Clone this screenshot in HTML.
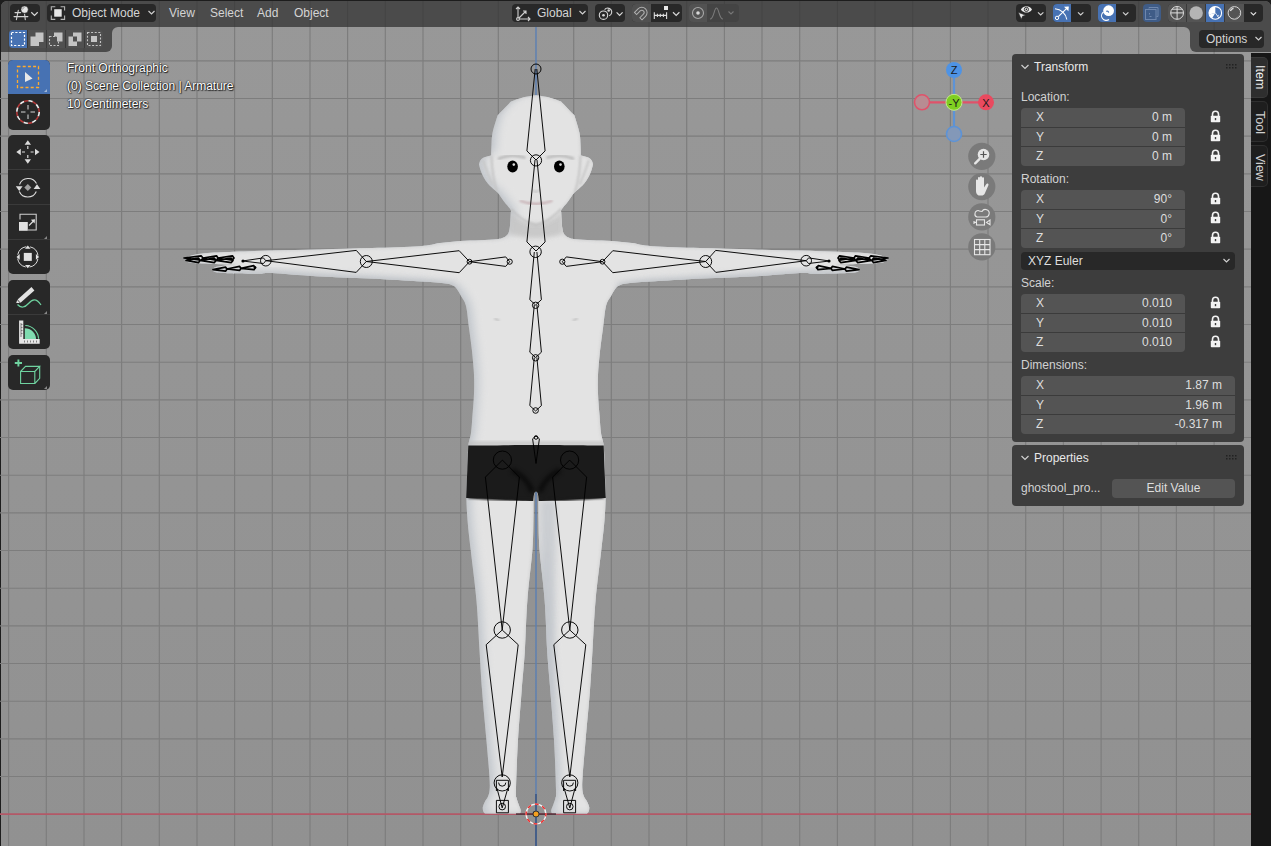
<!DOCTYPE html>
<html><head><meta charset="utf-8"><style>
*{margin:0;padding:0;box-sizing:border-box}
html,body{width:1271px;height:846px;overflow:hidden;background:#1d1d1d;font-family:"Liberation Sans",sans-serif;font-size:12px;color:#d6d6d6}
.abs{position:absolute}
</style></head><body>
<svg class="abs" style="left:0;top:0" width="1271" height="846" viewBox="0 0 1271 846">
<defs>
<linearGradient id="vpbg" x1="0" y1="0" x2="0" y2="1"><stop offset="0" stop-color="#989898"/><stop offset="1" stop-color="#919191"/></linearGradient>
</defs>
<rect x="1" y="1" width="1270" height="845" fill="url(#vpbg)"/>
<path d="M8.6 1V846M46.3 1V846M84.0 1V846M121.6 1V846M159.3 1V846M197.0 1V846M234.6 1V846M272.3 1V846M310.0 1V846M347.6 1V846M385.3 1V846M423.0 1V846M460.7 1V846M498.3 1V846M573.7 1V846M611.3 1V846M649.0 1V846M686.7 1V846M724.4 1V846M762.0 1V846M799.7 1V846M837.4 1V846M875.0 1V846M912.7 1V846M950.4 1V846M988.0 1V846M1025.7 1V846M1063.4 1V846M1101.1 1V846M1138.7 1V846M1176.4 1V846M1214.1 1V846M0 776.5H1251M0 738.9H1251M0 701.2H1251M0 663.5H1251M0 625.9H1251M0 588.2H1251M0 550.5H1251M0 512.8H1251M0 475.2H1251M0 437.5H1251M0 399.8H1251M0 362.2H1251M0 324.5H1251M0 286.8H1251M0 249.1H1251M0 211.5H1251M0 173.8H1251M0 136.1H1251M0 98.5H1251M0 60.8H1251" stroke="#7d7d7d" stroke-width="1.15" fill="none"/>
<path d="M0 814.2H1251" stroke="#b35867" stroke-width="1.7"/>
<path d="M536 27V846" stroke="#5b7fb3" stroke-width="1.4"/>
<defs>
<clipPath id="bodyclip"><path d="M536.0 95.3C533.8 95.7 527.2 96.5 523.0 97.5C518.8 98.5 513.0 100.8 511.0 101.5C508.8 103.8 499.8 113.2 497.5 115.5C496.7 118.4 493.5 128.1 492.5 133.0C491.5 137.9 491.7 141.2 491.5 145.0C491.3 148.8 491.2 153.8 491.2 155.5C490.1 155.8 486.3 156.5 484.5 157.3C482.7 158.1 481.4 159.0 480.5 160.2C479.6 161.4 479.2 163.6 479.0 164.3C479.2 165.2 479.8 167.9 480.5 170.0C481.2 172.1 482.2 174.7 483.5 177.0C484.8 179.3 486.2 181.7 488.0 183.8C489.8 185.9 493.0 188.6 494.0 189.5C494.7 190.1 496.3 191.0 498.0 193.0C499.7 195.0 501.9 198.8 504.0 201.5C506.1 204.2 509.4 207.8 510.5 209.5C511.6 211.2 510.8 211.6 510.8 212.0C510.7 213.3 510.6 217.3 510.4 220.0C510.2 222.7 510.1 225.7 509.7 228.0C509.3 230.3 509.0 232.4 508.0 234.0C507.0 235.6 505.3 236.7 503.5 237.6C501.7 238.5 500.9 238.8 497.0 239.2C493.1 239.6 486.2 239.9 480.0 240.2C473.8 240.5 466.7 240.4 460.0 240.9C453.3 241.4 446.7 242.1 440.0 243.0C433.3 243.9 431.3 245.4 420.0 246.2C408.7 247.0 388.7 247.5 372.0 248.0C355.3 248.5 336.7 249.0 320.0 249.4C303.3 249.8 286.4 250.1 272.0 250.5C257.6 250.9 244.7 251.4 233.5 251.8C222.3 252.2 211.9 252.6 205.0 253.2C198.1 253.8 195.4 254.3 192.0 255.2C188.6 256.1 185.8 257.9 184.5 258.5C184.9 259.1 185.1 261.0 187.0 261.8C188.9 262.6 190.2 262.8 196.0 263.2C201.8 263.6 215.3 264.0 222.0 264.2C228.7 264.4 233.7 264.5 236.0 264.6C234.0 264.8 227.5 265.4 224.0 265.8C220.5 266.2 216.9 266.6 215.0 267.3C213.1 268.0 212.9 269.6 212.5 270.0C213.1 270.4 213.1 271.8 216.0 272.3C218.9 272.9 223.0 273.1 230.0 273.3C237.0 273.5 251.0 273.8 258.0 273.7C265.0 273.6 262.3 272.6 272.0 273.0C281.7 273.4 299.7 275.3 316.0 276.2C332.3 277.1 352.3 277.6 370.0 278.5C387.7 279.4 409.3 280.7 422.0 281.5C434.7 282.3 440.8 282.8 446.0 283.5C451.2 284.2 451.2 284.7 453.0 285.5C454.8 286.3 455.2 286.8 456.5 288.5C457.8 290.2 459.4 293.1 461.0 296.0C462.6 298.9 464.7 300.7 466.0 306.0C467.3 311.3 468.0 320.5 469.0 328.0C470.0 335.5 471.2 343.2 472.0 351.0C472.8 358.8 473.7 367.9 474.0 375.0C474.3 382.1 474.2 386.8 474.0 393.5C473.8 400.2 473.0 408.4 472.5 415.0C472.0 421.6 471.7 427.8 471.0 433.0C470.3 438.2 468.9 439.8 468.3 446.0C467.7 452.2 467.6 461.7 467.3 470.0C467.0 478.3 466.4 487.7 466.4 496.0C466.4 504.3 466.8 511.0 467.5 520.0C468.2 529.0 469.2 536.7 470.7 550.0C472.2 563.3 474.9 583.3 476.4 600.0C477.9 616.7 478.6 635.0 479.5 650.0C480.4 665.0 480.9 675.0 482.0 690.0C483.1 705.0 485.2 725.7 486.4 740.0C487.6 754.3 488.9 767.7 489.4 776.0C489.9 784.3 489.9 786.5 489.6 790.0C489.3 793.5 488.6 795.1 487.8 797.0C487.0 798.9 485.8 799.8 485.0 801.5C484.2 803.2 483.1 805.3 482.8 807.0C482.5 808.7 482.9 810.4 483.3 811.5C483.7 812.6 484.7 813.2 485.0 813.6C490.8 813.6 514.0 813.6 519.8 813.6C520.0 813.1 521.0 812.1 520.8 810.5C520.6 808.9 519.2 806.1 518.5 804.0C517.8 801.9 517.0 800.3 516.6 798.0C516.2 795.7 515.8 799.7 516.0 790.0C516.2 780.3 517.0 756.7 518.0 740.0C519.0 723.3 520.6 705.0 521.7 690.0C522.9 675.0 524.0 665.0 524.9 650.0C525.8 635.0 526.1 616.7 527.4 600.0C528.6 583.3 531.4 563.3 532.4 550.0C533.4 536.7 533.2 528.3 533.4 520.0C533.6 511.7 533.4 504.4 533.6 500.0C533.8 495.6 534.0 494.9 534.4 493.5C534.8 492.1 535.7 491.8 536.0 491.5C536.3 491.8 537.2 492.1 537.6 493.5C538.0 494.9 538.2 495.6 538.4 500.0C538.6 504.4 538.4 511.7 538.6 520.0C538.8 528.3 538.6 536.7 539.6 550.0C540.6 563.3 543.4 583.3 544.6 600.0C545.9 616.7 546.2 635.0 547.1 650.0C548.0 665.0 549.1 675.0 550.3 690.0C551.4 705.0 553.0 723.3 554.0 740.0C555.0 756.7 555.8 780.3 556.0 790.0C556.2 799.7 555.8 795.7 555.4 798.0C555.0 800.3 554.2 801.9 553.5 804.0C552.8 806.1 551.4 808.9 551.2 810.5C551.0 812.1 552.0 813.1 552.2 813.6C558.0 813.6 581.2 813.6 587.0 813.6C587.3 813.2 588.3 812.6 588.7 811.5C589.1 810.4 589.5 808.7 589.2 807.0C588.9 805.3 587.8 803.2 587.0 801.5C586.2 799.8 585.0 798.9 584.2 797.0C583.4 795.1 582.7 793.5 582.4 790.0C582.1 786.5 582.1 784.3 582.6 776.0C583.1 767.7 584.4 754.3 585.6 740.0C586.8 725.7 588.9 705.0 590.0 690.0C591.1 675.0 591.6 665.0 592.5 650.0C593.4 635.0 594.1 616.7 595.6 600.0C597.1 583.3 599.8 563.3 601.3 550.0C602.8 536.7 603.8 529.0 604.5 520.0C605.2 511.0 605.6 504.3 605.6 496.0C605.6 487.7 605.0 478.3 604.7 470.0C604.4 461.7 604.3 452.2 603.7 446.0C603.1 439.8 601.7 438.2 601.0 433.0C600.3 427.8 600.0 421.6 599.5 415.0C599.0 408.4 598.2 400.2 598.0 393.5C597.8 386.8 597.7 382.1 598.0 375.0C598.3 367.9 599.2 358.8 600.0 351.0C600.8 343.2 602.0 335.5 603.0 328.0C604.0 320.5 604.7 311.3 606.0 306.0C607.3 300.7 609.4 298.9 611.0 296.0C612.6 293.1 614.2 290.2 615.5 288.5C616.8 286.8 617.2 286.3 619.0 285.5C620.8 284.7 620.8 284.2 626.0 283.5C631.2 282.8 637.3 282.3 650.0 281.5C662.7 280.7 684.3 279.4 702.0 278.5C719.7 277.6 739.7 277.1 756.0 276.2C772.3 275.3 790.3 273.4 800.0 273.0C809.7 272.6 807.0 273.6 814.0 273.7C821.0 273.8 835.0 273.5 842.0 273.3C849.0 273.1 853.1 272.9 856.0 272.3C858.9 271.8 858.9 270.4 859.5 270.0C859.1 269.6 858.9 268.0 857.0 267.3C855.1 266.6 851.5 266.2 848.0 265.8C844.5 265.4 838.0 264.8 836.0 264.6C838.3 264.5 843.3 264.4 850.0 264.2C856.7 264.0 870.2 263.6 876.0 263.2C881.8 262.8 883.1 262.6 885.0 261.8C886.9 261.0 887.1 259.1 887.5 258.5C886.2 257.9 883.4 256.1 880.0 255.2C876.6 254.3 873.9 253.8 867.0 253.2C860.1 252.6 849.7 252.2 838.5 251.8C827.3 251.4 814.4 250.9 800.0 250.5C785.6 250.1 768.7 249.8 752.0 249.4C735.3 249.0 716.7 248.5 700.0 248.0C683.3 247.5 663.3 247.0 652.0 246.2C640.7 245.4 638.7 243.9 632.0 243.0C625.3 242.1 618.7 241.4 612.0 240.9C605.3 240.4 598.2 240.5 592.0 240.2C585.8 239.9 578.9 239.6 575.0 239.2C571.1 238.8 570.3 238.5 568.5 237.6C566.7 236.7 565.0 235.6 564.0 234.0C563.0 232.4 562.7 230.3 562.3 228.0C561.9 225.7 561.8 222.7 561.6 220.0C561.4 217.3 561.3 213.3 561.2 212.0C561.2 211.6 560.4 211.2 561.5 209.5C562.6 207.8 565.9 204.2 568.0 201.5C570.1 198.8 572.3 195.0 574.0 193.0C575.7 191.0 577.3 190.1 578.0 189.5C579.0 188.6 582.2 185.9 584.0 183.8C585.8 181.7 587.2 179.3 588.5 177.0C589.8 174.7 590.8 172.1 591.5 170.0C592.2 167.9 592.8 165.2 593.0 164.3C592.8 163.6 592.4 161.4 591.5 160.2C590.6 159.0 589.3 158.1 587.5 157.3C585.7 156.5 581.9 155.8 580.8 155.5C580.8 153.8 580.7 148.8 580.5 145.0C580.3 141.2 580.5 137.9 579.5 133.0C578.5 128.1 575.3 118.4 574.5 115.5C572.2 113.2 563.2 103.8 561.0 101.5C559.0 100.8 553.2 98.5 549.0 97.5C544.8 96.5 538.2 95.7 536.0 95.3Z"/></clipPath>
<filter id="blur3" x="-20%" y="-20%" width="140%" height="140%" color-interpolation-filters="sRGB"><feGaussianBlur stdDeviation="3"/></filter>
<filter id="blur1" x="-20%" y="-20%" width="140%" height="140%" color-interpolation-filters="sRGB"><feGaussianBlur stdDeviation="1"/></filter>
<filter id="blur2" x="-50%" y="-50%" width="200%" height="200%" color-interpolation-filters="sRGB"><feGaussianBlur stdDeviation="2"/></filter>
<filter id="blur4" x="-50%" y="-50%" width="200%" height="200%" color-interpolation-filters="sRGB"><feGaussianBlur stdDeviation="4"/></filter>
<filter id="blur6" x="-50%" y="-50%" width="200%" height="200%" color-interpolation-filters="sRGB"><feGaussianBlur stdDeviation="6"/></filter>
</defs>
<path d="M536.0 95.3C533.8 95.7 527.2 96.5 523.0 97.5C518.8 98.5 513.0 100.8 511.0 101.5C508.8 103.8 499.8 113.2 497.5 115.5C496.7 118.4 493.5 128.1 492.5 133.0C491.5 137.9 491.7 141.2 491.5 145.0C491.3 148.8 491.2 153.8 491.2 155.5C490.1 155.8 486.3 156.5 484.5 157.3C482.7 158.1 481.4 159.0 480.5 160.2C479.6 161.4 479.2 163.6 479.0 164.3C479.2 165.2 479.8 167.9 480.5 170.0C481.2 172.1 482.2 174.7 483.5 177.0C484.8 179.3 486.2 181.7 488.0 183.8C489.8 185.9 493.0 188.6 494.0 189.5C494.7 190.1 496.3 191.0 498.0 193.0C499.7 195.0 501.9 198.8 504.0 201.5C506.1 204.2 509.4 207.8 510.5 209.5C511.6 211.2 510.8 211.6 510.8 212.0C510.7 213.3 510.6 217.3 510.4 220.0C510.2 222.7 510.1 225.7 509.7 228.0C509.3 230.3 509.0 232.4 508.0 234.0C507.0 235.6 505.3 236.7 503.5 237.6C501.7 238.5 500.9 238.8 497.0 239.2C493.1 239.6 486.2 239.9 480.0 240.2C473.8 240.5 466.7 240.4 460.0 240.9C453.3 241.4 446.7 242.1 440.0 243.0C433.3 243.9 431.3 245.4 420.0 246.2C408.7 247.0 388.7 247.5 372.0 248.0C355.3 248.5 336.7 249.0 320.0 249.4C303.3 249.8 286.4 250.1 272.0 250.5C257.6 250.9 244.7 251.4 233.5 251.8C222.3 252.2 211.9 252.6 205.0 253.2C198.1 253.8 195.4 254.3 192.0 255.2C188.6 256.1 185.8 257.9 184.5 258.5C184.9 259.1 185.1 261.0 187.0 261.8C188.9 262.6 190.2 262.8 196.0 263.2C201.8 263.6 215.3 264.0 222.0 264.2C228.7 264.4 233.7 264.5 236.0 264.6C234.0 264.8 227.5 265.4 224.0 265.8C220.5 266.2 216.9 266.6 215.0 267.3C213.1 268.0 212.9 269.6 212.5 270.0C213.1 270.4 213.1 271.8 216.0 272.3C218.9 272.9 223.0 273.1 230.0 273.3C237.0 273.5 251.0 273.8 258.0 273.7C265.0 273.6 262.3 272.6 272.0 273.0C281.7 273.4 299.7 275.3 316.0 276.2C332.3 277.1 352.3 277.6 370.0 278.5C387.7 279.4 409.3 280.7 422.0 281.5C434.7 282.3 440.8 282.8 446.0 283.5C451.2 284.2 451.2 284.7 453.0 285.5C454.8 286.3 455.2 286.8 456.5 288.5C457.8 290.2 459.4 293.1 461.0 296.0C462.6 298.9 464.7 300.7 466.0 306.0C467.3 311.3 468.0 320.5 469.0 328.0C470.0 335.5 471.2 343.2 472.0 351.0C472.8 358.8 473.7 367.9 474.0 375.0C474.3 382.1 474.2 386.8 474.0 393.5C473.8 400.2 473.0 408.4 472.5 415.0C472.0 421.6 471.7 427.8 471.0 433.0C470.3 438.2 468.9 439.8 468.3 446.0C467.7 452.2 467.6 461.7 467.3 470.0C467.0 478.3 466.4 487.7 466.4 496.0C466.4 504.3 466.8 511.0 467.5 520.0C468.2 529.0 469.2 536.7 470.7 550.0C472.2 563.3 474.9 583.3 476.4 600.0C477.9 616.7 478.6 635.0 479.5 650.0C480.4 665.0 480.9 675.0 482.0 690.0C483.1 705.0 485.2 725.7 486.4 740.0C487.6 754.3 488.9 767.7 489.4 776.0C489.9 784.3 489.9 786.5 489.6 790.0C489.3 793.5 488.6 795.1 487.8 797.0C487.0 798.9 485.8 799.8 485.0 801.5C484.2 803.2 483.1 805.3 482.8 807.0C482.5 808.7 482.9 810.4 483.3 811.5C483.7 812.6 484.7 813.2 485.0 813.6C490.8 813.6 514.0 813.6 519.8 813.6C520.0 813.1 521.0 812.1 520.8 810.5C520.6 808.9 519.2 806.1 518.5 804.0C517.8 801.9 517.0 800.3 516.6 798.0C516.2 795.7 515.8 799.7 516.0 790.0C516.2 780.3 517.0 756.7 518.0 740.0C519.0 723.3 520.6 705.0 521.7 690.0C522.9 675.0 524.0 665.0 524.9 650.0C525.8 635.0 526.1 616.7 527.4 600.0C528.6 583.3 531.4 563.3 532.4 550.0C533.4 536.7 533.2 528.3 533.4 520.0C533.6 511.7 533.4 504.4 533.6 500.0C533.8 495.6 534.0 494.9 534.4 493.5C534.8 492.1 535.7 491.8 536.0 491.5C536.3 491.8 537.2 492.1 537.6 493.5C538.0 494.9 538.2 495.6 538.4 500.0C538.6 504.4 538.4 511.7 538.6 520.0C538.8 528.3 538.6 536.7 539.6 550.0C540.6 563.3 543.4 583.3 544.6 600.0C545.9 616.7 546.2 635.0 547.1 650.0C548.0 665.0 549.1 675.0 550.3 690.0C551.4 705.0 553.0 723.3 554.0 740.0C555.0 756.7 555.8 780.3 556.0 790.0C556.2 799.7 555.8 795.7 555.4 798.0C555.0 800.3 554.2 801.9 553.5 804.0C552.8 806.1 551.4 808.9 551.2 810.5C551.0 812.1 552.0 813.1 552.2 813.6C558.0 813.6 581.2 813.6 587.0 813.6C587.3 813.2 588.3 812.6 588.7 811.5C589.1 810.4 589.5 808.7 589.2 807.0C588.9 805.3 587.8 803.2 587.0 801.5C586.2 799.8 585.0 798.9 584.2 797.0C583.4 795.1 582.7 793.5 582.4 790.0C582.1 786.5 582.1 784.3 582.6 776.0C583.1 767.7 584.4 754.3 585.6 740.0C586.8 725.7 588.9 705.0 590.0 690.0C591.1 675.0 591.6 665.0 592.5 650.0C593.4 635.0 594.1 616.7 595.6 600.0C597.1 583.3 599.8 563.3 601.3 550.0C602.8 536.7 603.8 529.0 604.5 520.0C605.2 511.0 605.6 504.3 605.6 496.0C605.6 487.7 605.0 478.3 604.7 470.0C604.4 461.7 604.3 452.2 603.7 446.0C603.1 439.8 601.7 438.2 601.0 433.0C600.3 427.8 600.0 421.6 599.5 415.0C599.0 408.4 598.2 400.2 598.0 393.5C597.8 386.8 597.7 382.1 598.0 375.0C598.3 367.9 599.2 358.8 600.0 351.0C600.8 343.2 602.0 335.5 603.0 328.0C604.0 320.5 604.7 311.3 606.0 306.0C607.3 300.7 609.4 298.9 611.0 296.0C612.6 293.1 614.2 290.2 615.5 288.5C616.8 286.8 617.2 286.3 619.0 285.5C620.8 284.7 620.8 284.2 626.0 283.5C631.2 282.8 637.3 282.3 650.0 281.5C662.7 280.7 684.3 279.4 702.0 278.5C719.7 277.6 739.7 277.1 756.0 276.2C772.3 275.3 790.3 273.4 800.0 273.0C809.7 272.6 807.0 273.6 814.0 273.7C821.0 273.8 835.0 273.5 842.0 273.3C849.0 273.1 853.1 272.9 856.0 272.3C858.9 271.8 858.9 270.4 859.5 270.0C859.1 269.6 858.9 268.0 857.0 267.3C855.1 266.6 851.5 266.2 848.0 265.8C844.5 265.4 838.0 264.8 836.0 264.6C838.3 264.5 843.3 264.4 850.0 264.2C856.7 264.0 870.2 263.6 876.0 263.2C881.8 262.8 883.1 262.6 885.0 261.8C886.9 261.0 887.1 259.1 887.5 258.5C886.2 257.9 883.4 256.1 880.0 255.2C876.6 254.3 873.9 253.8 867.0 253.2C860.1 252.6 849.7 252.2 838.5 251.8C827.3 251.4 814.4 250.9 800.0 250.5C785.6 250.1 768.7 249.8 752.0 249.4C735.3 249.0 716.7 248.5 700.0 248.0C683.3 247.5 663.3 247.0 652.0 246.2C640.7 245.4 638.7 243.9 632.0 243.0C625.3 242.1 618.7 241.4 612.0 240.9C605.3 240.4 598.2 240.5 592.0 240.2C585.8 239.9 578.9 239.6 575.0 239.2C571.1 238.8 570.3 238.5 568.5 237.6C566.7 236.7 565.0 235.6 564.0 234.0C563.0 232.4 562.7 230.3 562.3 228.0C561.9 225.7 561.8 222.7 561.6 220.0C561.4 217.3 561.3 213.3 561.2 212.0C561.2 211.6 560.4 211.2 561.5 209.5C562.6 207.8 565.9 204.2 568.0 201.5C570.1 198.8 572.3 195.0 574.0 193.0C575.7 191.0 577.3 190.1 578.0 189.5C579.0 188.6 582.2 185.9 584.0 183.8C585.8 181.7 587.2 179.3 588.5 177.0C589.8 174.7 590.8 172.1 591.5 170.0C592.2 167.9 592.8 165.2 593.0 164.3C592.8 163.6 592.4 161.4 591.5 160.2C590.6 159.0 589.3 158.1 587.5 157.3C585.7 156.5 581.9 155.8 580.8 155.5C580.8 153.8 580.7 148.8 580.5 145.0C580.3 141.2 580.5 137.9 579.5 133.0C578.5 128.1 575.3 118.4 574.5 115.5C572.2 113.2 563.2 103.8 561.0 101.5C559.0 100.8 553.2 98.5 549.0 97.5C544.8 96.5 538.2 95.7 536.0 95.3Z" fill="#c4c9cf"/>
<g clip-path="url(#bodyclip)">
<path d="M536.0 95.3C533.8 95.7 527.2 96.5 523.0 97.5C518.8 98.5 513.0 100.8 511.0 101.5C508.8 103.8 499.8 113.2 497.5 115.5C496.7 118.4 493.5 128.1 492.5 133.0C491.5 137.9 491.7 141.2 491.5 145.0C491.3 148.8 491.2 153.8 491.2 155.5C490.1 155.8 486.3 156.5 484.5 157.3C482.7 158.1 481.4 159.0 480.5 160.2C479.6 161.4 479.2 163.6 479.0 164.3C479.2 165.2 479.8 167.9 480.5 170.0C481.2 172.1 482.2 174.7 483.5 177.0C484.8 179.3 486.2 181.7 488.0 183.8C489.8 185.9 493.0 188.6 494.0 189.5C494.7 190.1 496.3 191.0 498.0 193.0C499.7 195.0 501.9 198.8 504.0 201.5C506.1 204.2 509.4 207.8 510.5 209.5C511.6 211.2 510.8 211.6 510.8 212.0C510.7 213.3 510.6 217.3 510.4 220.0C510.2 222.7 510.1 225.7 509.7 228.0C509.3 230.3 509.0 232.4 508.0 234.0C507.0 235.6 505.3 236.7 503.5 237.6C501.7 238.5 500.9 238.8 497.0 239.2C493.1 239.6 486.2 239.9 480.0 240.2C473.8 240.5 466.7 240.4 460.0 240.9C453.3 241.4 446.7 242.1 440.0 243.0C433.3 243.9 431.3 245.4 420.0 246.2C408.7 247.0 388.7 247.5 372.0 248.0C355.3 248.5 336.7 249.0 320.0 249.4C303.3 249.8 286.4 250.1 272.0 250.5C257.6 250.9 244.7 251.4 233.5 251.8C222.3 252.2 211.9 252.6 205.0 253.2C198.1 253.8 195.4 254.3 192.0 255.2C188.6 256.1 185.8 257.9 184.5 258.5C184.9 259.1 185.1 261.0 187.0 261.8C188.9 262.6 190.2 262.8 196.0 263.2C201.8 263.6 215.3 264.0 222.0 264.2C228.7 264.4 233.7 264.5 236.0 264.6C234.0 264.8 227.5 265.4 224.0 265.8C220.5 266.2 216.9 266.6 215.0 267.3C213.1 268.0 212.9 269.6 212.5 270.0C213.1 270.4 213.1 271.8 216.0 272.3C218.9 272.9 223.0 273.1 230.0 273.3C237.0 273.5 251.0 273.8 258.0 273.7C265.0 273.6 262.3 272.6 272.0 273.0C281.7 273.4 299.7 275.3 316.0 276.2C332.3 277.1 352.3 277.6 370.0 278.5C387.7 279.4 409.3 280.7 422.0 281.5C434.7 282.3 440.8 282.8 446.0 283.5C451.2 284.2 451.2 284.7 453.0 285.5C454.8 286.3 455.2 286.8 456.5 288.5C457.8 290.2 459.4 293.1 461.0 296.0C462.6 298.9 464.7 300.7 466.0 306.0C467.3 311.3 468.0 320.5 469.0 328.0C470.0 335.5 471.2 343.2 472.0 351.0C472.8 358.8 473.7 367.9 474.0 375.0C474.3 382.1 474.2 386.8 474.0 393.5C473.8 400.2 473.0 408.4 472.5 415.0C472.0 421.6 471.7 427.8 471.0 433.0C470.3 438.2 468.9 439.8 468.3 446.0C467.7 452.2 467.6 461.7 467.3 470.0C467.0 478.3 466.4 487.7 466.4 496.0C466.4 504.3 466.8 511.0 467.5 520.0C468.2 529.0 469.2 536.7 470.7 550.0C472.2 563.3 474.9 583.3 476.4 600.0C477.9 616.7 478.6 635.0 479.5 650.0C480.4 665.0 480.9 675.0 482.0 690.0C483.1 705.0 485.2 725.7 486.4 740.0C487.6 754.3 488.9 767.7 489.4 776.0C489.9 784.3 489.9 786.5 489.6 790.0C489.3 793.5 488.6 795.1 487.8 797.0C487.0 798.9 485.8 799.8 485.0 801.5C484.2 803.2 483.1 805.3 482.8 807.0C482.5 808.7 482.9 810.4 483.3 811.5C483.7 812.6 484.7 813.2 485.0 813.6C490.8 813.6 514.0 813.6 519.8 813.6C520.0 813.1 521.0 812.1 520.8 810.5C520.6 808.9 519.2 806.1 518.5 804.0C517.8 801.9 517.0 800.3 516.6 798.0C516.2 795.7 515.8 799.7 516.0 790.0C516.2 780.3 517.0 756.7 518.0 740.0C519.0 723.3 520.6 705.0 521.7 690.0C522.9 675.0 524.0 665.0 524.9 650.0C525.8 635.0 526.1 616.7 527.4 600.0C528.6 583.3 531.4 563.3 532.4 550.0C533.4 536.7 533.2 528.3 533.4 520.0C533.6 511.7 533.4 504.4 533.6 500.0C533.8 495.6 534.0 494.9 534.4 493.5C534.8 492.1 535.7 491.8 536.0 491.5C536.3 491.8 537.2 492.1 537.6 493.5C538.0 494.9 538.2 495.6 538.4 500.0C538.6 504.4 538.4 511.7 538.6 520.0C538.8 528.3 538.6 536.7 539.6 550.0C540.6 563.3 543.4 583.3 544.6 600.0C545.9 616.7 546.2 635.0 547.1 650.0C548.0 665.0 549.1 675.0 550.3 690.0C551.4 705.0 553.0 723.3 554.0 740.0C555.0 756.7 555.8 780.3 556.0 790.0C556.2 799.7 555.8 795.7 555.4 798.0C555.0 800.3 554.2 801.9 553.5 804.0C552.8 806.1 551.4 808.9 551.2 810.5C551.0 812.1 552.0 813.1 552.2 813.6C558.0 813.6 581.2 813.6 587.0 813.6C587.3 813.2 588.3 812.6 588.7 811.5C589.1 810.4 589.5 808.7 589.2 807.0C588.9 805.3 587.8 803.2 587.0 801.5C586.2 799.8 585.0 798.9 584.2 797.0C583.4 795.1 582.7 793.5 582.4 790.0C582.1 786.5 582.1 784.3 582.6 776.0C583.1 767.7 584.4 754.3 585.6 740.0C586.8 725.7 588.9 705.0 590.0 690.0C591.1 675.0 591.6 665.0 592.5 650.0C593.4 635.0 594.1 616.7 595.6 600.0C597.1 583.3 599.8 563.3 601.3 550.0C602.8 536.7 603.8 529.0 604.5 520.0C605.2 511.0 605.6 504.3 605.6 496.0C605.6 487.7 605.0 478.3 604.7 470.0C604.4 461.7 604.3 452.2 603.7 446.0C603.1 439.8 601.7 438.2 601.0 433.0C600.3 427.8 600.0 421.6 599.5 415.0C599.0 408.4 598.2 400.2 598.0 393.5C597.8 386.8 597.7 382.1 598.0 375.0C598.3 367.9 599.2 358.8 600.0 351.0C600.8 343.2 602.0 335.5 603.0 328.0C604.0 320.5 604.7 311.3 606.0 306.0C607.3 300.7 609.4 298.9 611.0 296.0C612.6 293.1 614.2 290.2 615.5 288.5C616.8 286.8 617.2 286.3 619.0 285.5C620.8 284.7 620.8 284.2 626.0 283.5C631.2 282.8 637.3 282.3 650.0 281.5C662.7 280.7 684.3 279.4 702.0 278.5C719.7 277.6 739.7 277.1 756.0 276.2C772.3 275.3 790.3 273.4 800.0 273.0C809.7 272.6 807.0 273.6 814.0 273.7C821.0 273.8 835.0 273.5 842.0 273.3C849.0 273.1 853.1 272.9 856.0 272.3C858.9 271.8 858.9 270.4 859.5 270.0C859.1 269.6 858.9 268.0 857.0 267.3C855.1 266.6 851.5 266.2 848.0 265.8C844.5 265.4 838.0 264.8 836.0 264.6C838.3 264.5 843.3 264.4 850.0 264.2C856.7 264.0 870.2 263.6 876.0 263.2C881.8 262.8 883.1 262.6 885.0 261.8C886.9 261.0 887.1 259.1 887.5 258.5C886.2 257.9 883.4 256.1 880.0 255.2C876.6 254.3 873.9 253.8 867.0 253.2C860.1 252.6 849.7 252.2 838.5 251.8C827.3 251.4 814.4 250.9 800.0 250.5C785.6 250.1 768.7 249.8 752.0 249.4C735.3 249.0 716.7 248.5 700.0 248.0C683.3 247.5 663.3 247.0 652.0 246.2C640.7 245.4 638.7 243.9 632.0 243.0C625.3 242.1 618.7 241.4 612.0 240.9C605.3 240.4 598.2 240.5 592.0 240.2C585.8 239.9 578.9 239.6 575.0 239.2C571.1 238.8 570.3 238.5 568.5 237.6C566.7 236.7 565.0 235.6 564.0 234.0C563.0 232.4 562.7 230.3 562.3 228.0C561.9 225.7 561.8 222.7 561.6 220.0C561.4 217.3 561.3 213.3 561.2 212.0C561.2 211.6 560.4 211.2 561.5 209.5C562.6 207.8 565.9 204.2 568.0 201.5C570.1 198.8 572.3 195.0 574.0 193.0C575.7 191.0 577.3 190.1 578.0 189.5C579.0 188.6 582.2 185.9 584.0 183.8C585.8 181.7 587.2 179.3 588.5 177.0C589.8 174.7 590.8 172.1 591.5 170.0C592.2 167.9 592.8 165.2 593.0 164.3C592.8 163.6 592.4 161.4 591.5 160.2C590.6 159.0 589.3 158.1 587.5 157.3C585.7 156.5 581.9 155.8 580.8 155.5C580.8 153.8 580.7 148.8 580.5 145.0C580.3 141.2 580.5 137.9 579.5 133.0C578.5 128.1 575.3 118.4 574.5 115.5C572.2 113.2 563.2 103.8 561.0 101.5C559.0 100.8 553.2 98.5 549.0 97.5C544.8 96.5 538.2 95.7 536.0 95.3Z" fill="#e3e3e3" stroke="#e3e3e3" stroke-width="6" transform="translate(8,-2)" filter="url(#blur4)"/>
<path d="M536.0 95.3C533.8 95.7 527.2 96.5 523.0 97.5C518.8 98.5 513.0 100.8 511.0 101.5C508.8 103.8 499.8 113.2 497.5 115.5C496.7 118.4 493.5 128.1 492.5 133.0C491.5 137.9 491.7 141.2 491.5 145.0C491.3 148.8 491.2 153.8 491.2 155.5C490.1 155.8 486.3 156.5 484.5 157.3C482.7 158.1 481.4 159.0 480.5 160.2C479.6 161.4 479.2 163.6 479.0 164.3C479.2 165.2 479.8 167.9 480.5 170.0C481.2 172.1 482.2 174.7 483.5 177.0C484.8 179.3 486.2 181.7 488.0 183.8C489.8 185.9 493.0 188.6 494.0 189.5C494.7 190.1 496.3 191.0 498.0 193.0C499.7 195.0 501.9 198.8 504.0 201.5C506.1 204.2 509.4 207.8 510.5 209.5C511.6 211.2 510.8 211.6 510.8 212.0C510.7 213.3 510.6 217.3 510.4 220.0C510.2 222.7 510.1 225.7 509.7 228.0C509.3 230.3 509.0 232.4 508.0 234.0C507.0 235.6 505.3 236.7 503.5 237.6C501.7 238.5 500.9 238.8 497.0 239.2C493.1 239.6 486.2 239.9 480.0 240.2C473.8 240.5 466.7 240.4 460.0 240.9C453.3 241.4 446.7 242.1 440.0 243.0C433.3 243.9 431.3 245.4 420.0 246.2C408.7 247.0 388.7 247.5 372.0 248.0C355.3 248.5 336.7 249.0 320.0 249.4C303.3 249.8 286.4 250.1 272.0 250.5C257.6 250.9 244.7 251.4 233.5 251.8C222.3 252.2 211.9 252.6 205.0 253.2C198.1 253.8 195.4 254.3 192.0 255.2C188.6 256.1 185.8 257.9 184.5 258.5C184.9 259.1 185.1 261.0 187.0 261.8C188.9 262.6 190.2 262.8 196.0 263.2C201.8 263.6 215.3 264.0 222.0 264.2C228.7 264.4 233.7 264.5 236.0 264.6C234.0 264.8 227.5 265.4 224.0 265.8C220.5 266.2 216.9 266.6 215.0 267.3C213.1 268.0 212.9 269.6 212.5 270.0C213.1 270.4 213.1 271.8 216.0 272.3C218.9 272.9 223.0 273.1 230.0 273.3C237.0 273.5 251.0 273.8 258.0 273.7C265.0 273.6 262.3 272.6 272.0 273.0C281.7 273.4 299.7 275.3 316.0 276.2C332.3 277.1 352.3 277.6 370.0 278.5C387.7 279.4 409.3 280.7 422.0 281.5C434.7 282.3 440.8 282.8 446.0 283.5C451.2 284.2 451.2 284.7 453.0 285.5C454.8 286.3 455.2 286.8 456.5 288.5C457.8 290.2 459.4 293.1 461.0 296.0C462.6 298.9 464.7 300.7 466.0 306.0C467.3 311.3 468.0 320.5 469.0 328.0C470.0 335.5 471.2 343.2 472.0 351.0C472.8 358.8 473.7 367.9 474.0 375.0C474.3 382.1 474.2 386.8 474.0 393.5C473.8 400.2 473.0 408.4 472.5 415.0C472.0 421.6 471.7 427.8 471.0 433.0C470.3 438.2 468.9 439.8 468.3 446.0C467.7 452.2 467.6 461.7 467.3 470.0C467.0 478.3 466.4 487.7 466.4 496.0C466.4 504.3 466.8 511.0 467.5 520.0C468.2 529.0 469.2 536.7 470.7 550.0C472.2 563.3 474.9 583.3 476.4 600.0C477.9 616.7 478.6 635.0 479.5 650.0C480.4 665.0 480.9 675.0 482.0 690.0C483.1 705.0 485.2 725.7 486.4 740.0C487.6 754.3 488.9 767.7 489.4 776.0C489.9 784.3 489.9 786.5 489.6 790.0C489.3 793.5 488.6 795.1 487.8 797.0C487.0 798.9 485.8 799.8 485.0 801.5C484.2 803.2 483.1 805.3 482.8 807.0C482.5 808.7 482.9 810.4 483.3 811.5C483.7 812.6 484.7 813.2 485.0 813.6C490.8 813.6 514.0 813.6 519.8 813.6C520.0 813.1 521.0 812.1 520.8 810.5C520.6 808.9 519.2 806.1 518.5 804.0C517.8 801.9 517.0 800.3 516.6 798.0C516.2 795.7 515.8 799.7 516.0 790.0C516.2 780.3 517.0 756.7 518.0 740.0C519.0 723.3 520.6 705.0 521.7 690.0C522.9 675.0 524.0 665.0 524.9 650.0C525.8 635.0 526.1 616.7 527.4 600.0C528.6 583.3 531.4 563.3 532.4 550.0C533.4 536.7 533.2 528.3 533.4 520.0C533.6 511.7 533.4 504.4 533.6 500.0C533.8 495.6 534.0 494.9 534.4 493.5C534.8 492.1 535.7 491.8 536.0 491.5C536.3 491.8 537.2 492.1 537.6 493.5C538.0 494.9 538.2 495.6 538.4 500.0C538.6 504.4 538.4 511.7 538.6 520.0C538.8 528.3 538.6 536.7 539.6 550.0C540.6 563.3 543.4 583.3 544.6 600.0C545.9 616.7 546.2 635.0 547.1 650.0C548.0 665.0 549.1 675.0 550.3 690.0C551.4 705.0 553.0 723.3 554.0 740.0C555.0 756.7 555.8 780.3 556.0 790.0C556.2 799.7 555.8 795.7 555.4 798.0C555.0 800.3 554.2 801.9 553.5 804.0C552.8 806.1 551.4 808.9 551.2 810.5C551.0 812.1 552.0 813.1 552.2 813.6C558.0 813.6 581.2 813.6 587.0 813.6C587.3 813.2 588.3 812.6 588.7 811.5C589.1 810.4 589.5 808.7 589.2 807.0C588.9 805.3 587.8 803.2 587.0 801.5C586.2 799.8 585.0 798.9 584.2 797.0C583.4 795.1 582.7 793.5 582.4 790.0C582.1 786.5 582.1 784.3 582.6 776.0C583.1 767.7 584.4 754.3 585.6 740.0C586.8 725.7 588.9 705.0 590.0 690.0C591.1 675.0 591.6 665.0 592.5 650.0C593.4 635.0 594.1 616.7 595.6 600.0C597.1 583.3 599.8 563.3 601.3 550.0C602.8 536.7 603.8 529.0 604.5 520.0C605.2 511.0 605.6 504.3 605.6 496.0C605.6 487.7 605.0 478.3 604.7 470.0C604.4 461.7 604.3 452.2 603.7 446.0C603.1 439.8 601.7 438.2 601.0 433.0C600.3 427.8 600.0 421.6 599.5 415.0C599.0 408.4 598.2 400.2 598.0 393.5C597.8 386.8 597.7 382.1 598.0 375.0C598.3 367.9 599.2 358.8 600.0 351.0C600.8 343.2 602.0 335.5 603.0 328.0C604.0 320.5 604.7 311.3 606.0 306.0C607.3 300.7 609.4 298.9 611.0 296.0C612.6 293.1 614.2 290.2 615.5 288.5C616.8 286.8 617.2 286.3 619.0 285.5C620.8 284.7 620.8 284.2 626.0 283.5C631.2 282.8 637.3 282.3 650.0 281.5C662.7 280.7 684.3 279.4 702.0 278.5C719.7 277.6 739.7 277.1 756.0 276.2C772.3 275.3 790.3 273.4 800.0 273.0C809.7 272.6 807.0 273.6 814.0 273.7C821.0 273.8 835.0 273.5 842.0 273.3C849.0 273.1 853.1 272.9 856.0 272.3C858.9 271.8 858.9 270.4 859.5 270.0C859.1 269.6 858.9 268.0 857.0 267.3C855.1 266.6 851.5 266.2 848.0 265.8C844.5 265.4 838.0 264.8 836.0 264.6C838.3 264.5 843.3 264.4 850.0 264.2C856.7 264.0 870.2 263.6 876.0 263.2C881.8 262.8 883.1 262.6 885.0 261.8C886.9 261.0 887.1 259.1 887.5 258.5C886.2 257.9 883.4 256.1 880.0 255.2C876.6 254.3 873.9 253.8 867.0 253.2C860.1 252.6 849.7 252.2 838.5 251.8C827.3 251.4 814.4 250.9 800.0 250.5C785.6 250.1 768.7 249.8 752.0 249.4C735.3 249.0 716.7 248.5 700.0 248.0C683.3 247.5 663.3 247.0 652.0 246.2C640.7 245.4 638.7 243.9 632.0 243.0C625.3 242.1 618.7 241.4 612.0 240.9C605.3 240.4 598.2 240.5 592.0 240.2C585.8 239.9 578.9 239.6 575.0 239.2C571.1 238.8 570.3 238.5 568.5 237.6C566.7 236.7 565.0 235.6 564.0 234.0C563.0 232.4 562.7 230.3 562.3 228.0C561.9 225.7 561.8 222.7 561.6 220.0C561.4 217.3 561.3 213.3 561.2 212.0C561.2 211.6 560.4 211.2 561.5 209.5C562.6 207.8 565.9 204.2 568.0 201.5C570.1 198.8 572.3 195.0 574.0 193.0C575.7 191.0 577.3 190.1 578.0 189.5C579.0 188.6 582.2 185.9 584.0 183.8C585.8 181.7 587.2 179.3 588.5 177.0C589.8 174.7 590.8 172.1 591.5 170.0C592.2 167.9 592.8 165.2 593.0 164.3C592.8 163.6 592.4 161.4 591.5 160.2C590.6 159.0 589.3 158.1 587.5 157.3C585.7 156.5 581.9 155.8 580.8 155.5C580.8 153.8 580.7 148.8 580.5 145.0C580.3 141.2 580.5 137.9 579.5 133.0C578.5 128.1 575.3 118.4 574.5 115.5C572.2 113.2 563.2 103.8 561.0 101.5C559.0 100.8 553.2 98.5 549.0 97.5C544.8 96.5 538.2 95.7 536.0 95.3Z" fill="none" stroke="#c8c8c8" stroke-width="2" filter="url(#blur1)" opacity="0.5"/>
<path d="M510 212Q536 236 562 212L563 234Q536 242 509 234Z" fill="#c6c6c6" filter="url(#blur2)" opacity="0.9"/>
<path d="M511 209Q523 222 536 225Q549 222 561 209" fill="none" stroke="#bdbdbd" stroke-width="1.6" filter="url(#blur1)"/>
<path d="M491.5 156Q492 176 497 192M580.5 156Q580 176 575 192" fill="none" stroke="#c4c4c4" stroke-width="2" filter="url(#blur1)"/>
<path d="M533 190Q536 194 539 190" fill="none" stroke="#c6c6c6" stroke-width="2" filter="url(#blur1)"/>
<rect x="460" y="441" width="152" height="5" fill="#c0c0c0" filter="url(#blur1)" opacity="0.6"/>
<path d="M200.0 271L316.0 277L422.0 283L455.0 287" fill="none" stroke="#bfc3c8" stroke-width="9" filter="url(#blur3)" opacity="0.75"/>
<path d="M872.0 271L756.0 277L650.0 283L617.0 287" fill="none" stroke="#bfc3c8" stroke-width="9" filter="url(#blur3)" opacity="0.75"/>
<path d="M540 500L556 500L553 790L543 790Z" fill="#c0c4ca" filter="url(#blur3)" opacity="0.7"/>
</g>
<g fill="none" stroke-linecap="round">
<path d="M499 158.5Q511 153.5 524.5 157.5M547.5 157.5Q561 153.5 573 158.5" stroke="#b9b9b9" stroke-width="2.6" filter="url(#blur1)"/>
<path d="M520.5 201Q536 207 551.7 201" stroke="#bfa3a8" stroke-width="1.8" filter="url(#blur1)"/>
<path d="M483.5 161Q486 170 492 184M588.5 161Q586 170 580 184" stroke="#c6c6c6" stroke-width="2" filter="url(#blur1)"/>
<path d="M495 318.5L498.5 320.5M577 318.5L573.5 320.5" stroke="#bdbdbd" stroke-width="2" filter="url(#blur1)"/>
</g>
<path d="M468.3 445.6C479.6 445.5 513.4 445.0 536.0 445.0C558.6 445.0 592.4 445.5 603.7 445.6C603.9 449.7 604.2 461.3 604.6 470.0C605.0 478.7 605.6 493.3 605.8 498.0C599.8 498.2 581.2 499.0 570.0 499.5C558.8 500.0 544.0 500.8 538.8 501.0C538.6 499.8 538.3 495.1 537.8 493.5C537.3 491.9 536.3 491.8 536.0 491.5C535.7 491.8 534.7 491.9 534.2 493.5C533.7 495.1 533.4 499.8 533.2 501.0C528.0 500.8 513.2 500.0 502.0 499.5C490.8 499.0 472.2 498.2 466.2 498.0C466.4 493.3 466.9 478.7 467.3 470.0C467.7 461.3 468.1 449.7 468.3 445.6Z" fill="#1b1b1b"/>
<path d="M468 497Q500 500 532 500M540 500Q572 500 604 497" stroke="#1b1b1b" stroke-width="2.5" fill="none" filter="url(#blur1)"/>
<path d="M512 470Q528 478 532 492M560 470Q544 478 540 492" stroke="#080808" stroke-width="4" fill="none" filter="url(#blur2)"/>
<g fill="#000">
<ellipse cx="512.6" cy="166.6" rx="5.3" ry="6"/>
<ellipse cx="559.3" cy="166.6" rx="5.3" ry="6"/>
</g>
<circle cx="513.8000000000001" cy="164.6" r="1.3" fill="#ddd"/>
<circle cx="560.5" cy="164.6" r="1.3" fill="#ddd"/>
<g stroke="#000" stroke-width="0.95" fill="none" stroke-linejoin="round"><path d="M536.0 160.0L545.1 150.9L536.8 69.0M535.2 69.0L526.9 150.9L536.0 160.0M536.0 251.0L545.1 241.9L537.0 160.0M535.0 160.0L526.9 241.9L536.0 251.0M535.6 305.0L541.4 299.7L536.9 252.0M534.3 252.0L529.8 299.7L535.6 305.0M535.6 357.5L541.4 352.2L536.9 305.0M534.3 305.0L529.8 352.2L535.6 357.5M535.6 411.0L541.4 405.6L536.9 357.5M534.3 357.5L529.8 405.6L535.6 411.0M536.0 436.0L532.6 438.8L536.0 463.5L539.4 438.8ZM509.7 261.7L505.7 256.9L469.5 261.7L505.7 266.4ZM469.5 261.7L459.2 250.7L366.3 261.5L459.2 272.7ZM366.3 261.5L356.3 250.4L265.8 260.7L356.2 272.4ZM265.8 260.7L263.4 257.9L242.5 261.0L263.5 263.5ZM502.4 460.1L485.4 477.1L502.2 630.0L519.4 477.1ZM502.2 630.0L486.2 644.7L502.2 777.0L518.2 644.7ZM497.0 788.4L502.2 807.9L507.8 788.4M496.4 791V780.3H508.4V791M496.4 800.4H508.4V812.8H496.4ZM498.6 782.6A3.6 3.6 0 0 0 505.8 782.6M562.3 261.7L566.3 266.4L602.5 261.7L566.3 256.9ZM602.5 261.7L612.8 272.7L705.7 261.5L612.8 250.7ZM705.7 261.5L715.8 272.4L806.2 260.7L715.7 250.4ZM806.2 260.7L808.5 263.5L829.5 261.0L808.6 257.9ZM569.6 460.1L552.6 477.1L569.8 630.0L586.6 477.1ZM569.8 630.0L553.8 644.7L569.8 777.0L585.8 644.7ZM575.0 788.4L569.8 807.9L564.2 788.4M575.6 791V780.3H563.6V791M575.6 800.4H563.6V812.8H575.6ZM573.4 782.6A3.6 3.6 0 0 1 566.2 782.6"/><circle cx="536.0" cy="69.0" r="5"/><circle cx="536.0" cy="160.4" r="5.6"/><circle cx="535.6" cy="251.8" r="5.7"/><circle cx="535.6" cy="305.3" r="3.2"/><circle cx="535.6" cy="357.8" r="3.2"/><circle cx="535.6" cy="410.5" r="2.8"/><circle cx="536.0" cy="437.5" r="1.8"/><circle cx="509.7" cy="261.7" r="2.6"/><circle cx="469.5" cy="261.7" r="2.4"/><circle cx="366.3" cy="261.5" r="6"/><circle cx="265.8" cy="260.7" r="5.3"/><circle cx="502.4" cy="460.1" r="9.1"/><circle cx="502.2" cy="630.0" r="8.2"/><circle cx="502.2" cy="782.9" r="8.1"/><circle cx="502.2" cy="806.6" r="3.3"/><circle cx="562.3" cy="261.7" r="2.6"/><circle cx="602.5" cy="261.7" r="2.4"/><circle cx="705.7" cy="261.5" r="6"/><circle cx="806.2" cy="260.7" r="5.3"/><circle cx="569.6" cy="460.1" r="9.1"/><circle cx="569.8" cy="630.0" r="8.2"/><circle cx="569.8" cy="782.9" r="8.1"/><circle cx="569.8" cy="806.6" r="3.3"/></g>
<path d="M234.0 258.0L232.4 255.8L218.0 258.0L232.4 260.2ZM218.0 258.0L216.5 255.8L203.0 258.0L216.5 260.2ZM203.0 258.0L201.1 255.8L184.0 258.0L201.1 260.2ZM233.0 260.4L231.3 258.2L216.0 260.4L231.3 262.6ZM216.0 260.4L214.4 258.2L200.0 260.4L214.4 262.6ZM200.0 260.4L198.6 258.2L186.0 260.4L198.6 262.6ZM255.3 267.6L253.8 265.7L241.0 268.3L254.0 269.7ZM241.0 268.3L239.5 266.4L227.0 269.0L239.7 270.4ZM227.0 269.0L225.5 267.1L213.0 269.6L225.7 271.1ZM838.0 258.0L839.6 260.2L854.0 258.0L839.6 255.8ZM854.0 258.0L855.5 260.2L869.0 258.0L855.5 255.8ZM869.0 258.0L870.9 260.2L888.0 258.0L870.9 255.8ZM839.0 260.4L840.7 262.6L856.0 260.4L840.7 258.2ZM856.0 260.4L857.6 262.6L872.0 260.4L857.6 258.2ZM872.0 260.4L873.4 262.6L886.0 260.4L873.4 258.2ZM816.7 267.6L818.0 269.7L831.0 268.3L818.2 265.7ZM831.0 268.3L832.3 270.4L845.0 269.0L832.5 266.4ZM845.0 269.0L846.3 271.1L859.0 269.6L846.5 267.1Z" stroke="#000" stroke-width="1.7" fill="none" stroke-linejoin="round"/>
<circle cx="243.0" cy="261" r="1.6" fill="#000"/><circle cx="255.0" cy="267.6" r="1.4" fill="#000"/>
<circle cx="829.0" cy="261" r="1.6" fill="#000"/><circle cx="817.0" cy="267.6" r="1.4" fill="#000"/>
<path d="M516 814.2H556" stroke="#5b3942" stroke-width="1.7"/><path d="M536 794V846" stroke="#3c5681" stroke-width="1.6"/>
<circle cx="536" cy="814" r="9.9" fill="none" stroke="#f4f4f4" stroke-width="1.4"/>
<circle cx="536" cy="814" r="9.9" fill="none" stroke="#ee3030" stroke-width="1.5" stroke-dasharray="3.89 3.89" stroke-dashoffset="1.5"/>
<circle cx="536" cy="814" r="3.3" fill="#1c2330"/><circle cx="536" cy="814" r="2.5" fill="#f5a020"/>
</svg>
<style>
.hdr{position:absolute;left:1px;top:1px;width:1270px;height:26px;background:rgba(50,50,50,0.75);border-radius:6px 6px 0 0}
.reg{position:absolute;background:rgba(50,50,50,0.75)}
.btn{position:absolute;height:18px;top:4px;background:#282828;border-radius:4px}
.mt{position:absolute;top:6px;font-size:12px;color:#d4d4d4;line-height:14px;white-space:nowrap}
.tb{position:absolute;left:8px;width:42px;background:#282828;border-radius:5px;overflow:hidden}
.tb .sep{position:absolute;left:0;width:42px;height:1px;background:#3a3a3a}
.ov{position:absolute;left:67px;font-size:12px;color:#ffffff;text-shadow:0 0 1.5px #000,1px 1px 1px rgba(0,0,0,.7),-0.5px -0.5px 1px rgba(0,0,0,.5);white-space:nowrap;line-height:14px}
.pnl{position:absolute;left:1012px;width:232px;background:#3d3d3d;border-radius:4px}
.lbl{position:absolute;left:9px;font-size:12px;color:#d2d2d2;line-height:14px;white-space:nowrap}
.fld{position:absolute;left:9px;background:#545454;border-radius:4px;overflow:hidden}
.row{position:absolute;left:0;height:19px;width:100%;font-size:12px;color:#dedede;line-height:19px}
.row .k{position:absolute;left:15px;top:0}
.row .v{position:absolute;right:13px;top:0}
.row.s{border-top:1px solid #3b3b3b}
.lock{position:absolute;left:198px}
.tab{position:absolute;left:1251px;width:17px;background:#2c2c2c;border-radius:0 5px 5px 0;border:1px solid #2f2f2f;border-left:none}
.tabt{position:absolute;left:3px;writing-mode:vertical-rl;font-size:12.5px;color:#d0d0d0;line-height:12px}
</style>
<!-- header -->
<div class="hdr"></div>
<svg class="abs" style="left:0;top:0" width="1271" height="10"><path d="M1 1H7A6 6 0 0 0 1 7Z M1265 1H1271V7A6 6 0 0 0 1265 1Z" fill="#1d1d1d"/></svg>
<div class="reg" style="left:1px;top:27px;width:111px;height:25px;border-radius:0 0 6px 0"></div>
<div class="reg" style="left:1190px;top:27px;width:81px;height:25px;border-radius:0 0 0 6px"></div>

<div class="btn" style="left:10px;width:30px"></div>
<svg class="abs" style="left:10px;top:4px" width="30" height="18" viewBox="0 0 30 18">
<g stroke="#d2d2d2" stroke-width="1.1" fill="none" stroke-linecap="round"><path d="M5 8.6H10.6M4 12.6H17.9M8.3 6.3L6.4 15.6M14.6 10.3L15.3 15.6"/></g>
<circle cx="14.6" cy="5.6" r="3.6" fill="#e6e6e6" stroke="#2a2a2a" stroke-width="0.5"/><path d="M12.6 5.5A2 2 0 0 1 14.5 3.5" stroke="#777" stroke-width="0.7" fill="none"/>
<path d="M21.3 8.3L24.5 11.4L27.7 8.3" stroke="#d8d8d8" stroke-width="1.2" fill="none"/>
</svg>
<div class="btn" style="left:47px;width:109px"></div>
<svg class="abs" style="left:47px;top:4px" width="22" height="18" viewBox="0 0 22 18">
<path d="M4.3 6.6V2.8H8.3M13.6 2.8H17.6V6.6M17.6 11.6V15.4H13.6M8.3 15.4H4.3V11.6" stroke="#b4b4b4" stroke-width="1.1" fill="none"/>
<rect x="6.6" y="4.6" width="8.7" height="8.7" fill="#1e1e1e"/><rect x="7.2" y="5.2" width="7.5" height="7.5" fill="#e6e6e6"/>
</svg>
<div class="mt" style="left:72px">Object Mode</div>
<svg class="abs" style="left:147px;top:9px" width="10" height="8"><path d="M1.5 2L4.5 5L7.5 2" stroke="#cfcfcf" stroke-width="1.2" fill="none"/></svg>
<div class="mt" style="left:169px">View</div>
<div class="mt" style="left:210px">Select</div>
<div class="mt" style="left:257px">Add</div>
<div class="mt" style="left:294px">Object</div>

<div class="btn" style="left:512px;width:76px"></div>
<svg class="abs" style="left:512px;top:4px" width="22" height="18" viewBox="0 0 22 18">
<g stroke="#d0d0d0" stroke-width="1.1" fill="none"><path d="M6 15V3M4 5L6 3L8 5M6 15H18M16 13L18 15L16 17M6 15L14 7M11 7H14V10"/><circle cx="6" cy="15" r="1.4" fill="#282828"/></g>
</svg>
<div class="mt" style="left:537px">Global</div>
<svg class="abs" style="left:578px;top:9px" width="10" height="8"><path d="M1.5 2L4.5 5L7.5 2" stroke="#cfcfcf" stroke-width="1.2" fill="none"/></svg>

<div class="btn" style="left:595px;width:30px"></div>
<svg class="abs" style="left:595px;top:4px" width="30" height="18" viewBox="0 0 30 18">
<g stroke="#d8d8d8" stroke-width="1.1" fill="none"><circle cx="8.5" cy="11.2" r="4.2"/><path d="M9.6 5.6A4 4 0 1 1 14.2 11.8"/></g>
<circle cx="8.5" cy="11.2" r="1.3" fill="#d8d8d8"/><circle cx="13.7" cy="6.5" r="1.3" fill="#d8d8d8"/>
<path d="M21.6 8.3L24.6 11.3L27.6 8.3" stroke="#d8d8d8" stroke-width="1.2" fill="none"/>
</svg>

<div class="btn" style="left:632px;width:50px"></div>
<div class="btn" style="left:632px;width:19px;background:#505050;border-radius:4px 0 0 4px"></div>
<svg class="abs" style="left:632px;top:4px" width="50" height="18" viewBox="0 0 50 18">
<path transform="translate(9.8 8.6) rotate(45)" d="M-5.3 5V0A5.3 5.3 0 0 1 5.3 0V5H2.3V0A2.3 2.3 0 0 0 -2.3 0V5Z" stroke="#b0b0b0" stroke-width="1" fill="none"/>
<g stroke="#dcdcdc" stroke-width="1.1" fill="none"><path d="M22.3 11.4H34.6M22.3 8.3V14.9M25.4 9.8V13M28.3 9.8V13M31.4 9.8V13M34.6 8.2V14.9"/></g>
<rect x="32" y="2" width="4" height="4" fill="#e8e8e8"/>
<path d="M41 8.3L44.2 11.4L47.4 8.3" stroke="#d8d8d8" stroke-width="1.2" fill="none"/>
</svg>

<div class="btn" style="left:689px;width:50px;background:#444444"></div>
<div class="btn" style="left:689px;width:18px;background:#525252;border-radius:4px 0 0 4px"></div>
<svg class="abs" style="left:689px;top:4px" width="50" height="18" viewBox="0 0 50 18">
<circle cx="9" cy="9" r="5.5" stroke="#a8a8a8" stroke-width="1.1" fill="none"/><circle cx="9" cy="9" r="1.8" fill="#d8d8d8"/>
<path d="M21 15C25 15 25 4 27.5 4S30 15 34 15" stroke="#7a7a7a" stroke-width="1.1" fill="none"/>
<path d="M39.5 7.5L42 10L44.5 7.5" stroke="#777" stroke-width="1.1" fill="none"/>
</svg>

<!-- right header buttons -->
<div class="btn" style="left:1016px;width:30px"></div>
<svg class="abs" style="left:1016px;top:4px" width="30" height="18" viewBox="0 0 30 18">
<path d="M4.9 5.4C7.5 1.2 13.5 1.2 16 5.4C13.5 9.6 7.5 9.6 4.9 5.4Z" fill="#e8e8e8"/><circle cx="10.4" cy="5.4" r="2.1" fill="none" stroke="#282828" stroke-width="0.9"/><circle cx="10.4" cy="5.4" r="0.8" fill="#282828"/>
<path d="M2.2 8.3L10 11.3L6.6 12.3L5.3 15.4Z" fill="#e8e8e8" stroke="#282828" stroke-width="0.7"/>
<path d="M22 8.3L24.7 11L27.4 8.3" stroke="#d0d0d0" stroke-width="1.2" fill="none"/>
</svg>
<div class="btn" style="left:1053px;width:38px"></div>
<div class="btn" style="left:1053px;width:18px;background:#4772b3;border-radius:4px 0 0 4px"></div>
<svg class="abs" style="left:1053px;top:4px" width="38" height="18" viewBox="0 0 38 18">
<path d="M2 4.8C8 5.2 13 9.5 13.8 15.5" stroke="#fff" stroke-width="1.1" fill="none"/><circle cx="4" cy="13.9" r="1.7" stroke="#fff" stroke-width="1" fill="#4772b3"/>
<path d="M5.3 12.6L15 3.2" stroke="#fff" stroke-width="1.1"/><path d="M15.8 2.4L15.4 7.2L11 2.8Z" fill="#fff"/>
<path d="M25 8.3L27.7 11L30.4 8.3" stroke="#d0d0d0" stroke-width="1.2" fill="none"/>
</svg>
<div class="btn" style="left:1098px;width:38px"></div>
<div class="btn" style="left:1098px;width:18px;background:#4772b3;border-radius:4px 0 0 4px"></div>
<svg class="abs" style="left:1098px;top:4px" width="38" height="18" viewBox="0 0 38 18">
<circle cx="10.6" cy="6.7" r="5.4" fill="#fff"/>
<path d="M8.3 7.5A1.3 1.3 0 0 1 10.5 8.7" stroke="#4772b3" stroke-width="1.3" fill="none"/>
<path d="M5.5 8A4.6 4.6 0 0 0 11 15.5" stroke="#fff" stroke-width="1.1" fill="none"/>
<path d="M25 8.3L27.7 11L30.4 8.3" stroke="#d0d0d0" stroke-width="1.2" fill="none"/>
</svg>
<div class="btn" style="left:1143px;width:18px;background:#3f5c87"></div>
<svg class="abs" style="left:1143px;top:4px" width="18" height="18" viewBox="0 0 18 18">
<path d="M6 4.5V3.5H15V12.5H13.5" stroke="#6f87ad" stroke-width="1" fill="none"/><rect x="2.5" y="5.5" width="10.5" height="10" stroke="#6f87ad" stroke-width="1" fill="none"/>
<path d="M6.5 9V10.5M6.5 12.5H8.5" stroke="#6f87ad" stroke-width="1"/>
</svg>
<div class="btn" style="left:1168px;width:95px;background:#282828"></div>
<div class="btn" style="left:1168px;width:76px;background:#545454;border-radius:4px 0 0 4px"></div>
<div class="btn" style="left:1206px;width:18px;background:#4772b3;border-radius:0"></div>
<div class="abs" style="left:1186px;top:4px;width:1px;height:18px;background:#3a3a3a"></div>
<div class="abs" style="left:1205px;top:4px;width:1px;height:18px;background:#3a3a3a"></div>
<div class="abs" style="left:1224px;top:4px;width:1px;height:18px;background:#3a3a3a"></div>
<svg class="abs" style="left:1168px;top:4px" width="95" height="18" viewBox="0 0 95 18">
<g stroke="#dedede" stroke-width="1" fill="none"><circle cx="9.1" cy="8.9" r="6.4"/><path d="M2.7 8.9H15.5M9.1 2.5V15.3M4 5.2H14.2"/></g>
<circle cx="28.2" cy="8.9" r="6.7" fill="#b4b4b4"/>
<circle cx="47.3" cy="8.9" r="6.3" fill="#4772b3" stroke="#fff" stroke-width="1.1"/>
<path d="M47.3 8.9V2.6A6.3 6.3 0 0 0 41.2 10.4Z" fill="#fff"/><path d="M47.3 8.9L41.2 10.4A6.3 6.3 0 0 0 44 14.3Z" fill="#fff"/>
<path d="M47.3 8.9L51 14M49.3 12.2L50.8 11.2" stroke="#fff" stroke-width="0.8"/>
<circle cx="66.4" cy="8.9" r="6.3" stroke="#d8d8d8" stroke-width="1" fill="none"/>
<path d="M62.3 7A4.5 4.5 0 0 1 65.5 4.2" stroke="#dcdcdc" stroke-width="1.6" fill="none"/>
<path d="M70 12.5L71 11.5M68.5 14L69.5 13M71.5 10L72.3 9.2" stroke="#aaa" stroke-width="0.8"/>
<path d="M82.7 8.3L85.4 11L88.1 8.3" stroke="#e0e0e0" stroke-width="1.2" fill="none"/>
</svg>

<!-- tool settings select modes -->
<svg class="abs" style="left:9px;top:30px" width="95" height="18" viewBox="0 0 95 18">
<rect x="0" y="0" width="94" height="18" rx="4" fill="#505050"/>
<path d="M4 0H18V18H4A4 4 0 0 1 0 14V4A4 4 0 0 1 4 0Z" fill="#4772b3"/>
<path d="M18.5 0V18M37.5 0V18M56.5 0V18M75.5 0V18" stroke="#3a3a3a" stroke-width="1"/>
<rect x="2.5" y="2.5" width="13" height="13" stroke="#fff" stroke-width="1.2" fill="none" stroke-dasharray="2.2 1.6"/>
<path d="M21.5 6.5H26.5V2.5H34.5V12H30V16H21.5Z" fill="#c4c4c4"/>
<rect x="40.5" y="6.5" width="9" height="9" stroke="#c4c4c4" stroke-width="1.1" fill="none" stroke-dasharray="2 1.5"/><path d="M45 2.5H53.5V11.5H48V6.5H45Z" fill="#c4c4c4"/>
<path d="M59.5 6.5H64V2.5H72.5V11.5H68V16H59.5Z M64 6.5V11.5H68V6.5Z" fill="#c4c4c4" fill-rule="evenodd"/>
<rect x="78.5" y="2.5" width="13" height="13" stroke="#c4c4c4" stroke-width="1.1" fill="none" stroke-dasharray="2 1.6"/><rect x="82" y="6" width="6" height="6" fill="#c4c4c4"/>
</svg>

<svg class="abs" style="left:1184px;top:27px" width="6" height="6"><path d="M6 0V6A6 6 0 0 0 0 0Z" fill="rgba(50,50,50,0.75)"/></svg>
<svg class="abs" style="left:112px;top:27px" width="6" height="6"><path d="M0 0H6A6 6 0 0 0 0 6Z" fill="rgba(50,50,50,0.75)"/></svg>
<div class="btn" style="left:1199px;top:30px;width:65px"></div>
<div class="mt" style="left:1206px;top:32px">Options</div>
<svg class="abs" style="left:1254px;top:35px" width="10" height="8"><path d="M1.5 2L4.5 5L7.5 2" stroke="#cfcfcf" stroke-width="1.2" fill="none"/></svg>

<!-- left toolbar -->
<div class="tb" style="top:60px;height:70px">
 <div style="position:absolute;left:0;top:0;width:42px;height:34px;background:#4772b3"></div>
</div>
<svg class="abs" style="left:8px;top:60px" width="42" height="70" viewBox="0 0 42 70">
<rect x="9.5" y="6.5" width="21" height="21" stroke="#ffab2e" stroke-width="1.3" fill="none" stroke-dasharray="3 2.2"/>
<path d="M17 12V22L24.5 18.5Z" fill="#e8e8e8"/>
<path d="M39 29V32H36Z" fill="#9fb5d6"/>
<circle cx="20" cy="52" r="11.2" stroke="#f0f0f0" stroke-width="1.6" fill="none" stroke-dasharray="4.5 4.3"/>
<circle cx="20" cy="52" r="11.2" stroke="#b03838" stroke-width="1.6" fill="none" stroke-dasharray="4.3 4.5" stroke-dashoffset="4.4"/>
<path d="M20 45V49.5M20 54.5V59M13 52H17.5M22.5 52H27" stroke="#9a9a9a" stroke-width="1.6"/>
</svg>

<div class="tb" style="top:135px;height:139px">
 <div class="sep" style="top:34px"></div><div class="sep" style="top:69px"></div><div class="sep" style="top:104px"></div>
</div>
<svg class="abs" style="left:8px;top:135px" width="42" height="139" viewBox="0 0 42 139">
<g fill="#dcdcdc">
<path d="M19.8 5.3L23 9.8H16.6Z M19.8 28.7L23 24.2H16.6Z M8.3 17L12.8 13.8V20.2Z M31.5 17L27 13.8V20.2Z"/>
<path d="M19.2 11H20.4V14H19.2ZM19.2 20H20.4V23H19.2ZM14 16.4H17V17.6H14ZM22.6 16.4H25.6V17.6H22.6Z"/>
</g>
<g transform="translate(0,35)">
<path d="M11.5 14.5A9.3 9.3 0 0 1 28.5 13.5M28.3 21.5A9.3 9.3 0 0 1 11.3 21.5" stroke="#dcdcdc" stroke-width="1.1" fill="none"/>
<path d="M19.8 14L23.3 17.5L19.8 21L16.3 17.5Z" fill="#a0a0a0"/>
<path d="M7.8 16.3H14.6L11.2 21Z M25.6 19H32.4L29 14.2Z" fill="#dcdcdc"/>
</g>
<g transform="translate(0,70)">
<path d="M12 14.5V9.3H28.2V25H20" stroke="#cfcfcf" stroke-width="1.1" fill="none"/>
<rect x="11" y="17" width="8.8" height="8.8" fill="#e2e2e2"/>
<path d="M21 20.5L26 15.5" stroke="#e2e2e2" stroke-width="1.1"/><path d="M27 14.3L26.6 18.4L22.9 14.7Z" fill="#e2e2e2"/>
<path d="M39 31V34H36Z" fill="#888"/>
</g>
<g transform="translate(0,105)">
<circle cx="19.8" cy="16.9" r="10.3" stroke="#dcdcdc" stroke-width="1" fill="none" stroke-dasharray="12.2 4" stroke-dashoffset="-2"/>
<rect x="15.8" y="12.9" width="8" height="8" fill="#e2e2e2"/>
<path d="M19.8 5.6L22.6 8.8H17Z M19.8 28.2L22.6 25H17Z M8.5 16.9L11.7 14.1V19.7Z M31.1 16.9L27.9 14.1V19.7Z" fill="#e2e2e2"/>
</g>
</svg>

<div class="tb" style="top:280px;height:69px">
 <div class="sep" style="top:34px"></div>
</div>
<svg class="abs" style="left:8px;top:280px" width="42" height="69" viewBox="0 0 42 69">
<path d="M9.6 19.4L23.5 7.1L26.4 10.4L12.5 22.7Z" fill="#e2e2e2"/>
<path d="M8.2 23L9.2 20.1L11.9 23.1Z" fill="#e2e2e2"/>
<path d="M9.5 24.5C13 28.5 17 27.5 20.5 23.5S28 17.5 33 25" stroke="#6fd3a0" stroke-width="1.2" fill="none"/>
<path d="M39 31V34H36Z" fill="#888"/>
<g transform="translate(0,34)">
<path d="M16.8 14.2A11.3 11.3 0 0 1 28.1 25.5H16.8Z" fill="#7fdcb0"/>
<path d="M17.3 11.5A13.8 13.8 0 0 1 30.6 24.8" stroke="#6fd3a0" stroke-width="1.1" fill="none"/>
<path d="M11.1 6.4H15.3V25H31.7V29.8H11.1Z" fill="#e6e6e6"/>
<path d="M13 9V23M13 10.5H14.5M13 13.5H14.5M13 16.5H14.5M13 19.5H14.5M16.5 26.5V28.5M19.5 26.5V28.5M22.5 26.5V28.5M25.5 26.5V28.5M28.5 26.5V28.5" stroke="#666" stroke-width="0.8"/>
</g>
</svg>

<div class="tb" style="top:355px;height:35px"></div>
<svg class="abs" style="left:8px;top:355px" width="42" height="35" viewBox="0 0 42 35">
<path d="M6.8 8H14M10.4 4.4V11.6" stroke="#6fd3a0" stroke-width="1.9"/>
<path d="M12.6 16.5H26.8V28.5H12.6Z M12.6 16.5L17.5 11.4H31.7L26.8 16.5M31.7 11.4V23.4L26.8 28.5" stroke="#6fd3a0" stroke-width="1.1" fill="none"/>
<path d="M39 31V34H36Z" fill="#888"/>
</svg>

<!-- overlay text -->
<div class="ov" style="top:61px">Front Orthographic</div>
<div class="ov" style="top:79px">(0) Scene Collection | Armature</div>
<div class="ov" style="top:97px">10 Centimeters</div>

<!-- gizmo -->
<svg class="abs" style="left:901px;top:50px" width="110" height="220" viewBox="0 0 110 220">
<path d="M53 20V84" stroke="#5d93d6" stroke-width="2.2"/>
<path d="M21 52.3H85" stroke="#e0526a" stroke-width="2.2"/>
<circle cx="21" cy="52.3" r="7.5" fill="#b88c92" stroke="#e0526a" stroke-width="1.6"/>
<circle cx="53" cy="84" r="7.5" fill="#8398b8" stroke="#5d93d6" stroke-width="1.6"/>
<circle cx="53" cy="20" r="8" fill="#4e93e5"/>
<circle cx="85" cy="52.3" r="8" fill="#e94a5f"/>
<circle cx="53" cy="52.3" r="8" fill="#7fcf21" stroke="#c4ea8a" stroke-width="1"/>
<text x="53" y="24.2" font-size="11" text-anchor="middle" fill="#1a1a1a" font-family="Liberation Sans">Z</text>
<text x="85" y="56.5" font-size="11" text-anchor="middle" fill="#1a1a1a" font-family="Liberation Sans">X</text>
<text x="53" y="56.5" font-size="11" text-anchor="middle" fill="#1a1a1a" font-family="Liberation Sans">-Y</text>
<g fill="#7a7a7a"><circle cx="80.8" cy="106.3" r="13.6"/><circle cx="80.8" cy="136.6" r="13.6"/><circle cx="80.8" cy="166.9" r="13.6"/><circle cx="80.8" cy="196.9" r="13.6"/></g>
<circle cx="82.5" cy="104.5" r="5.8" fill="#e6e6e6"/><path d="M82.5 101.3V107.7M79.3 104.5H85.7" stroke="#555" stroke-width="1.2"/><path d="M74.2 113.3L78.6 108.9" stroke="#e6e6e6" stroke-width="2.4" stroke-linecap="round"/>
<path d="M75 136V130.5C75 129.2 77 129.2 77 130.5V135 128C77 126.7 79 126.7 79 128V134.5 127.3C79 126 81 126 81 127.3V134.5 128.3C81 127 83 127 83 128.3V137.5L85.2 134.2C86.2 133 88 133.8 87.4 135.3L83.8 143.5C83 145 82 145.5 80.5 145.5H78.5C76 145.5 75 143 75 141Z" fill="#e6e6e6"/>
<g stroke="#e6e6e6" stroke-width="1.1" fill="none">
<path d="M74 163.5A3 3 0 0 1 78.5 161L81 161.5A3.8 3.8 0 1 1 84 167H76A3 3 0 0 1 74 163.5Z"/>
<rect x="75.5" y="169.8" width="8" height="5.2"/><path d="M85.5 172.4L89 170V174.8Z M72.5 172.4H75.5M73 171V174"/>
<rect x="73.5" y="189.5" width="15.5" height="15.2"/><path d="M78.7 189.5V204.7M83.8 189.5V204.7M73.5 194.6H89M73.5 199.6H89"/>
</g>
</svg>

<!-- N panel tabs strip -->
<div class="abs" style="left:1251px;top:53px;width:20px;height:793px;background:#171717"></div>
<div class="tab" style="top:57px;height:41px;background:#2e2e2e;border-color:#3a3a3a"><div class="tabt" style="top:7px;color:#f0f0f0">Item</div></div>
<div class="tab" style="top:101px;height:41px;background:#1e1e1e"><div class="tabt" style="top:9px">Tool</div></div>
<div class="tab" style="top:145px;height:42px;background:#1e1e1e"><div class="tabt" style="top:8px">View</div></div>

<!-- transform panel -->
<div class="pnl" style="top:54px;height:388px">
 <svg class="abs" style="left:8px;top:8px" width="10" height="10"><path d="M1.5 3L5 6.5L8.5 3" stroke="#d0d0d0" stroke-width="1.2" fill="none"/></svg>
 <div class="lbl" style="left:22px;top:6px;color:#e8e8e8">Transform</div>
 <svg class="abs" style="left:214px;top:10px" width="12" height="6"><g fill="#222"><rect x="0" y="0" width="1.5" height="1.5"/><rect x="3" y="0" width="1.5" height="1.5"/><rect x="6" y="0" width="1.5" height="1.5"/><rect x="9" y="0" width="1.5" height="1.5"/><rect x="0" y="3" width="1.5" height="1.5"/><rect x="3" y="3" width="1.5" height="1.5"/><rect x="6" y="3" width="1.5" height="1.5"/><rect x="9" y="3" width="1.5" height="1.5"/></g></svg>

 <div class="lbl" style="top:36px">Location:</div>
 <div class="fld" style="top:54px;width:164px;height:58px">
  <div class="row" style="top:0"><span class="k">X</span><span class="v">0 m</span></div>
  <div class="row s" style="top:19px;height:20px"><span class="k">Y</span><span class="v">0 m</span></div>
  <div class="row s" style="top:38px;height:20px"><span class="k">Z</span><span class="v">0 m</span></div>
 </div>
 <div class="lbl" style="top:118px">Rotation:</div>
 <div class="fld" style="top:136px;width:164px;height:58px">
  <div class="row" style="top:0"><span class="k">X</span><span class="v">90°</span></div>
  <div class="row s" style="top:19px;height:20px"><span class="k">Y</span><span class="v">0°</span></div>
  <div class="row s" style="top:38px;height:20px"><span class="k">Z</span><span class="v">0°</span></div>
 </div>
 <div class="fld" style="top:198px;width:214px;height:18px;background:#282828">
  <div class="row" style="top:0;height:18px;line-height:18px"><span class="k" style="left:7px">XYZ Euler</span></div>
  <svg class="abs" style="left:201px;top:5px" width="10" height="8"><path d="M1.5 2L4.5 5L7.5 2" stroke="#cfcfcf" stroke-width="1.2" fill="none"/></svg>
 </div>
 <div class="lbl" style="top:222px">Scale:</div>
 <div class="fld" style="top:240px;width:164px;height:58px">
  <div class="row" style="top:0"><span class="k">X</span><span class="v">0.010</span></div>
  <div class="row s" style="top:19px;height:20px"><span class="k">Y</span><span class="v">0.010</span></div>
  <div class="row s" style="top:38px;height:20px"><span class="k">Z</span><span class="v">0.010</span></div>
 </div>
 <div class="lbl" style="top:304px">Dimensions:</div>
 <div class="fld" style="top:322px;width:214px;height:58px">
  <div class="row" style="top:0"><span class="k">X</span><span class="v" style="right:13px">1.87 m</span></div>
  <div class="row s" style="top:19px;height:20px"><span class="k">Y</span><span class="v">1.96 m</span></div>
  <div class="row s" style="top:38px;height:20px"><span class="k">Z</span><span class="v">-0.317 m</span></div>
 </div>
 <svg class="abs" style="left:198px;top:56px" width="11" height="13" viewBox="0 0 11 13"><path d="M2.5 6V4.2A3 3 0 0 1 8.5 4.2V6" stroke="#f2f2f2" stroke-width="1.6" fill="none"/><rect x="0.8" y="5.8" width="9.4" height="6.4" rx="0.8" fill="#f2f2f2"/><rect x="4.8" y="8" width="1.4" height="2.2" fill="#3d3d3d"/></svg><svg class="abs" style="left:198px;top:75px" width="11" height="13" viewBox="0 0 11 13"><path d="M2.5 6V4.2A3 3 0 0 1 8.5 4.2V6" stroke="#f2f2f2" stroke-width="1.6" fill="none"/><rect x="0.8" y="5.8" width="9.4" height="6.4" rx="0.8" fill="#f2f2f2"/><rect x="4.8" y="8" width="1.4" height="2.2" fill="#3d3d3d"/></svg><svg class="abs" style="left:198px;top:95px" width="11" height="13" viewBox="0 0 11 13"><path d="M2.5 6V4.2A3 3 0 0 1 8.5 4.2V6" stroke="#f2f2f2" stroke-width="1.6" fill="none"/><rect x="0.8" y="5.8" width="9.4" height="6.4" rx="0.8" fill="#f2f2f2"/><rect x="4.8" y="8" width="1.4" height="2.2" fill="#3d3d3d"/></svg><svg class="abs" style="left:198px;top:138px" width="11" height="13" viewBox="0 0 11 13"><path d="M2.5 6V4.2A3 3 0 0 1 8.5 4.2V6" stroke="#f2f2f2" stroke-width="1.6" fill="none"/><rect x="0.8" y="5.8" width="9.4" height="6.4" rx="0.8" fill="#f2f2f2"/><rect x="4.8" y="8" width="1.4" height="2.2" fill="#3d3d3d"/></svg><svg class="abs" style="left:198px;top:157px" width="11" height="13" viewBox="0 0 11 13"><path d="M2.5 6V4.2A3 3 0 0 1 8.5 4.2V6" stroke="#f2f2f2" stroke-width="1.6" fill="none"/><rect x="0.8" y="5.8" width="9.4" height="6.4" rx="0.8" fill="#f2f2f2"/><rect x="4.8" y="8" width="1.4" height="2.2" fill="#3d3d3d"/></svg><svg class="abs" style="left:198px;top:177px" width="11" height="13" viewBox="0 0 11 13"><path d="M2.5 6V4.2A3 3 0 0 1 8.5 4.2V6" stroke="#f2f2f2" stroke-width="1.6" fill="none"/><rect x="0.8" y="5.8" width="9.4" height="6.4" rx="0.8" fill="#f2f2f2"/><rect x="4.8" y="8" width="1.4" height="2.2" fill="#3d3d3d"/></svg><svg class="abs" style="left:198px;top:242px" width="11" height="13" viewBox="0 0 11 13"><path d="M2.5 6V4.2A3 3 0 0 1 8.5 4.2V6" stroke="#f2f2f2" stroke-width="1.6" fill="none"/><rect x="0.8" y="5.8" width="9.4" height="6.4" rx="0.8" fill="#f2f2f2"/><rect x="4.8" y="8" width="1.4" height="2.2" fill="#3d3d3d"/></svg><svg class="abs" style="left:198px;top:261px" width="11" height="13" viewBox="0 0 11 13"><path d="M2.5 6V4.2A3 3 0 0 1 8.5 4.2V6" stroke="#f2f2f2" stroke-width="1.6" fill="none"/><rect x="0.8" y="5.8" width="9.4" height="6.4" rx="0.8" fill="#f2f2f2"/><rect x="4.8" y="8" width="1.4" height="2.2" fill="#3d3d3d"/></svg><svg class="abs" style="left:198px;top:281px" width="11" height="13" viewBox="0 0 11 13"><path d="M2.5 6V4.2A3 3 0 0 1 8.5 4.2V6" stroke="#f2f2f2" stroke-width="1.6" fill="none"/><rect x="0.8" y="5.8" width="9.4" height="6.4" rx="0.8" fill="#f2f2f2"/><rect x="4.8" y="8" width="1.4" height="2.2" fill="#3d3d3d"/></svg>
</div>

<div class="pnl" style="top:445px;height:61px">
 <svg class="abs" style="left:8px;top:8px" width="10" height="10"><path d="M1.5 3L5 6.5L8.5 3" stroke="#d0d0d0" stroke-width="1.2" fill="none"/></svg>
 <div class="lbl" style="left:22px;top:6px;color:#e8e8e8">Properties</div>
 <svg class="abs" style="left:214px;top:10px" width="12" height="6"><g fill="#222"><rect x="0" y="0" width="1.5" height="1.5"/><rect x="3" y="0" width="1.5" height="1.5"/><rect x="6" y="0" width="1.5" height="1.5"/><rect x="9" y="0" width="1.5" height="1.5"/><rect x="0" y="3" width="1.5" height="1.5"/><rect x="3" y="3" width="1.5" height="1.5"/><rect x="6" y="3" width="1.5" height="1.5"/><rect x="9" y="3" width="1.5" height="1.5"/></g></svg>
 <div class="lbl" style="top:36px">ghostool_pro...</div>
 <div class="fld" style="left:100px;top:34px;width:123px;height:19px">
  <div class="row" style="top:0;text-align:center">Edit Value</div>
 </div>
</div>

</body></html>
